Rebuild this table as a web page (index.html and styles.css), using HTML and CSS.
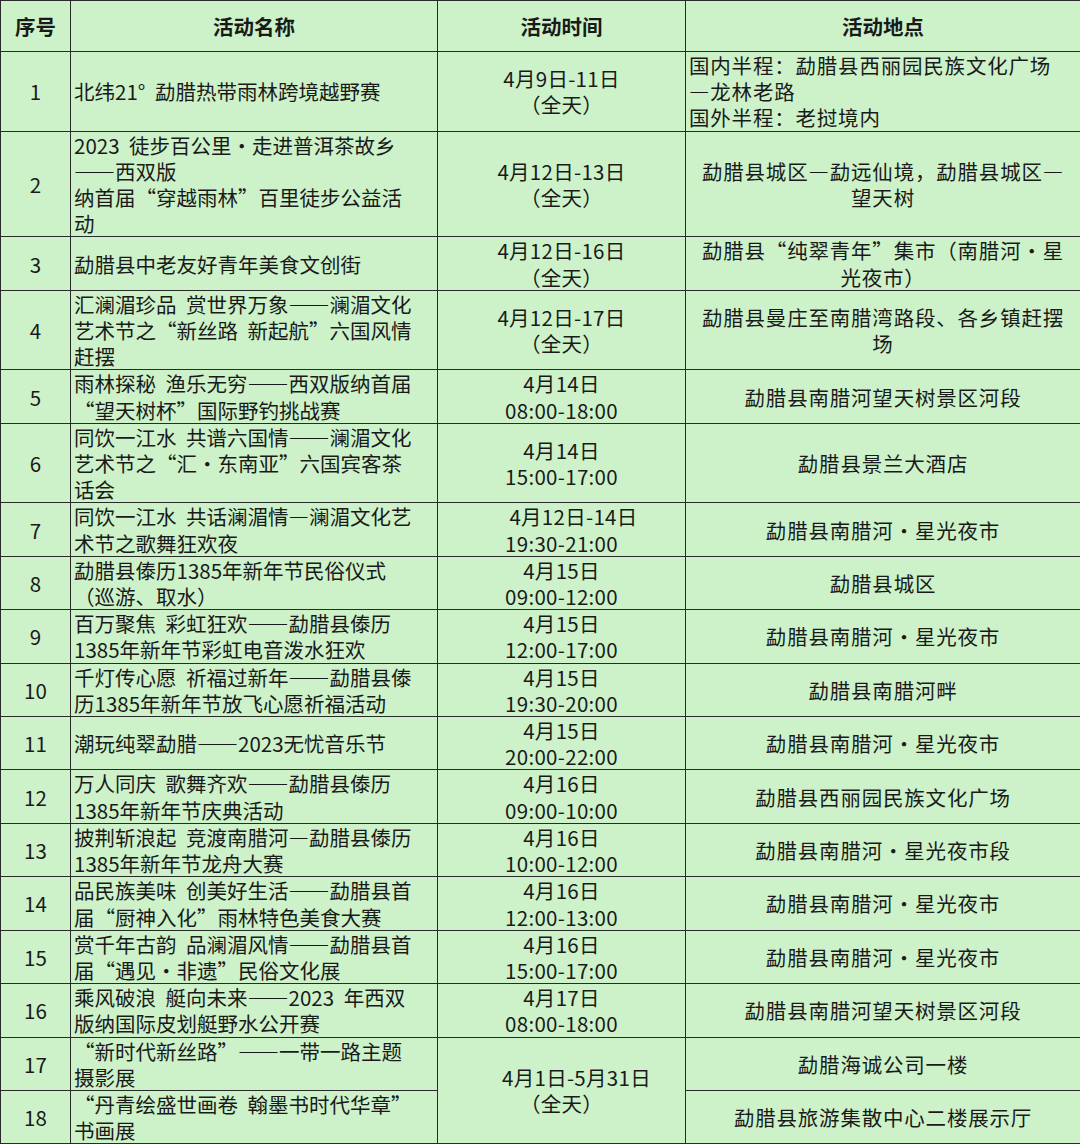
FILE: index.html
```html
<!DOCTYPE html>
<html lang="zh-CN">
<head>
<meta charset="utf-8">
<title>活动安排</title>
<link rel="stylesheet" href="styles.css">
</head>
<body>
<table class="schedule">
  <colgroup>
    <col class="c-no">
    <col class="c-name">
    <col class="c-time">
    <col class="c-place">
  </colgroup>
  <thead>
    <tr class="head">
      <th>序号</th>
      <th>活动名称</th>
      <th>活动时间</th>
      <th>活动地点</th>
    </tr>
  </thead>
  <tbody>
    <tr>
      <td class="no">1</td>
      <td class="name">北纬21°&nbsp;勐腊热带雨林跨境越野赛</td>
      <td class="time">4月9日-11日<br>（全天）</td>
      <td class="place left">国内半程：勐腊县西丽园民族文化广场<br>—龙林老路<br>国外半程：老挝境内</td>
    </tr>
    <tr>
      <td class="no">2</td>
      <td class="name">2023 徒步百公里·走进普洱茶故乡<br>——西双版<br>纳首届“穿越雨林”百里徒步公益活<br>动</td>
      <td class="time">4月12日-13日<br>（全天）</td>
      <td class="place">勐腊县城区—勐远仙境，勐腊县城区—<br>望天树</td>
    </tr>
    <tr>
      <td class="no">3</td>
      <td class="name">勐腊县中老友好青年美食文创街</td>
      <td class="time">4月12日-16日<br>（全天）</td>
      <td class="place">勐腊县“纯翠青年”集市（南腊河·星<br>光夜市）</td>
    </tr>
    <tr>
      <td class="no">4</td>
      <td class="name">汇澜湄珍品 赏世界万象——澜湄文化<br>艺术节之“新丝路 新起航”六国风情<br>赶摆</td>
      <td class="time">4月12日-17日<br>（全天）</td>
      <td class="place">勐腊县曼庄至南腊湾路段、各乡镇赶摆<br>场</td>
    </tr>
    <tr>
      <td class="no">5</td>
      <td class="name">雨林探秘 渔乐无穷——西双版纳首届<br>“望天树杯”国际野钓挑战赛</td>
      <td class="time">4月14日<br>08:00-18:00</td>
      <td class="place">勐腊县南腊河望天树景区河段</td>
    </tr>
    <tr>
      <td class="no">6</td>
      <td class="name">同饮一江水 共谱六国情——澜湄文化<br>艺术节之“汇·东南亚”六国宾客茶<br>话会</td>
      <td class="time">4月14日<br>15:00-17:00</td>
      <td class="place">勐腊县景兰大酒店</td>
    </tr>
    <tr>
      <td class="no">7</td>
      <td class="name">同饮一江水 共话澜湄情—澜湄文化艺<br>术节之歌舞狂欢夜</td>
      <td class="time"><span class="shift">4月12日-14日</span><br>19:30-21:00</td>
      <td class="place">勐腊县南腊河·星光夜市</td>
    </tr>
    <tr>
      <td class="no">8</td>
      <td class="name">勐腊县傣历1385年新年节民俗仪式<br>（巡游、取水）</td>
      <td class="time">4月15日<br>09:00-12:00</td>
      <td class="place">勐腊县城区</td>
    </tr>
    <tr>
      <td class="no">9</td>
      <td class="name">百万聚焦 彩虹狂欢——勐腊县傣历<br>1385年新年节彩虹电音泼水狂欢</td>
      <td class="time">4月15日<br>12:00-17:00</td>
      <td class="place">勐腊县南腊河·星光夜市</td>
    </tr>
    <tr>
      <td class="no">10</td>
      <td class="name">千灯传心愿 祈福过新年——勐腊县傣<br>历1385年新年节放飞心愿祈福活动</td>
      <td class="time">4月15日<br>19:30-20:00</td>
      <td class="place">勐腊县南腊河畔</td>
    </tr>
    <tr>
      <td class="no">11</td>
      <td class="name">潮玩纯翠勐腊——2023无忧音乐节</td>
      <td class="time">4月15日<br>20:00-22:00</td>
      <td class="place">勐腊县南腊河·星光夜市</td>
    </tr>
    <tr>
      <td class="no">12</td>
      <td class="name">万人同庆 歌舞齐欢——勐腊县傣历<br>1385年新年节庆典活动</td>
      <td class="time">4月16日<br>09:00-10:00</td>
      <td class="place">勐腊县西丽园民族文化广场</td>
    </tr>
    <tr>
      <td class="no">13</td>
      <td class="name">披荆斩浪起 竞渡南腊河—勐腊县傣历<br>1385年新年节龙舟大赛</td>
      <td class="time">4月16日<br>10:00-12:00</td>
      <td class="place">勐腊县南腊河·星光夜市段</td>
    </tr>
    <tr>
      <td class="no">14</td>
      <td class="name">品民族美味 创美好生活——勐腊县首<br>届“厨神入化”雨林特色美食大赛</td>
      <td class="time">4月16日<br>12:00-13:00</td>
      <td class="place">勐腊县南腊河·星光夜市</td>
    </tr>
    <tr>
      <td class="no">15</td>
      <td class="name">赏千年古韵 品澜湄风情——勐腊县首<br>届“遇见·非遗”民俗文化展</td>
      <td class="time">4月16日<br>15:00-17:00</td>
      <td class="place">勐腊县南腊河·星光夜市</td>
    </tr>
    <tr>
      <td class="no">16</td>
      <td class="name">乘风破浪 艇向未来——2023 年西双<br>版纳国际皮划艇野水公开赛</td>
      <td class="time">4月17日<br>08:00-18:00</td>
      <td class="place">勐腊县南腊河望天树景区河段</td>
    </tr>
    <tr>
      <td class="no">17</td>
      <td class="name">“新时代新丝路”——一带一路主题<br>摄影展</td>
      <td class="time" rowspan="2"><span class="shift wide">4月1日-5月31日</span><br>（全天）</td>
      <td class="place">勐腊海诚公司一楼</td>
    </tr>
    <tr>
      <td class="no">18</td>
      <td class="name">“丹青绘盛世画卷 翰墨书时代华章”<br>书画展</td>
      <td class="place">勐腊县旅游集散中心二楼展示厅</td>
    </tr>
  </tbody>
</table>
</body>
</html>
```

FILE: styles.css
```css
html, body {
  margin: 0;
  padding: 0;
  background: #ffffff;
}

.schedule {
  width: 1080px;
  table-layout: fixed;
  border-collapse: collapse;
  background: #cdf2c9;
  color: #1a1a1a;
  font-family: "Noto Sans CJK SC", "Noto Sans", sans-serif;
  font-size: 20.5px;
  line-height: 26.2px;
}

.c-no { width: 70px; }
.c-name { width: 367px; }
.c-time { width: 248px; }
.c-place { width: 395px; }

.schedule th,
.schedule td {
  border: 1.5px solid #2a2a2a;
  padding: 0 3px;
  vertical-align: middle;
  overflow: hidden;
  white-space: nowrap;
}

.head th {
  height: 50px;
  font-weight: bold;
  text-align: center;
}

.no {
  text-align: center;
}

.name {
  text-align: left;
  word-spacing: 5px;
}

.time {
  text-align: center;
  letter-spacing: 0.3px;
}

.place {
  text-align: center;
  letter-spacing: 0.8px;
}

.place.left {
  text-align: left;
}

.shift {
  padding-left: 24px;
}

.shift.wide {
  padding-left: 30px;
}
```
